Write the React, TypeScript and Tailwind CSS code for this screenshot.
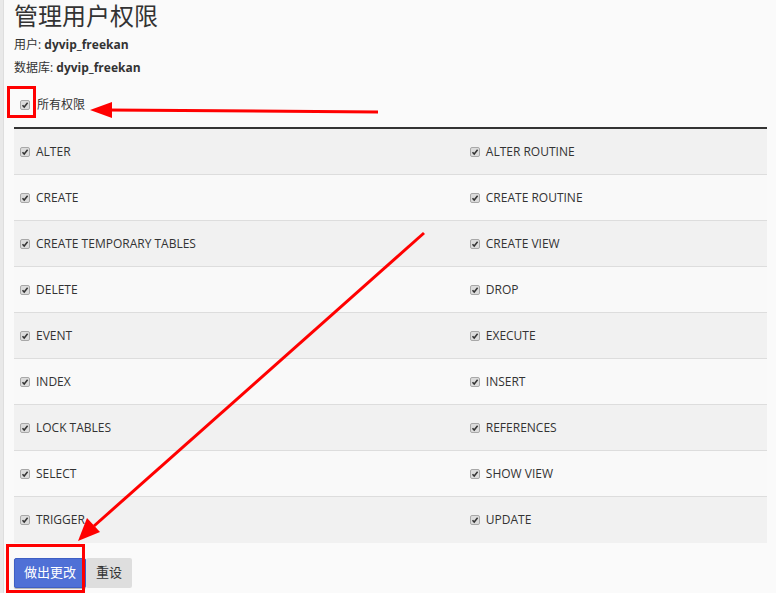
import React from 'react';

const perms: [string, string][] = [
  ['ALTER', 'ALTER ROUTINE'],
  ['CREATE', 'CREATE ROUTINE'],
  ['CREATE TEMPORARY TABLES', 'CREATE VIEW'],
  ['DELETE', 'DROP'],
  ['EVENT', 'EXECUTE'],
  ['INDEX', 'INSERT'],
  ['LOCK TABLES', 'REFERENCES'],
  ['SELECT', 'SHOW VIEW'],
  ['TRIGGER', 'UPDATE'],
];

function Check() {
  return (
    <svg width="10" height="10" viewBox="0 0 10 10" className="shrink-0">
      <rect x="0.5" y="0.5" width="9" height="9" rx="1.5" fill="#dcdcdc" stroke="#a8a8a8" />
      <path d="M2.5 5.2 L4.2 7 L7.6 2.8" fill="none" stroke="#333" strokeWidth="1.5" />
    </svg>
  );
}

function Perm({ label }: { label: string }) {
  return (
    <label className="flex items-center gap-[6px]">
      <Check />
      <span>{label}</span>
    </label>
  );
}

export default function App() {
  return (
    <div
      className="relative w-[776px] h-[593px] overflow-hidden bg-[#fafafa] text-[#333] flex"
      style={{ fontFamily: '"Open Sans", "Noto Sans CJK SC", sans-serif' }}
    >
      <div className="w-[4px] bg-[#e9e9e9] border-r border-[#dedede]" />
      <div className="flex-1 pl-[10px] pr-[9px]">
        <h1 className="text-[24px] leading-[32px] mt-[0px] text-[#333]">管理用户权限</h1>
        <p className="text-[12px] leading-[20px] mt-[3px]">
          用户: <b className="font-bold">dyvip_freekan</b>
        </p>
        <p className="text-[12px] leading-[20px] mt-[3px]">
          数据库: <b className="font-bold">dyvip_freekan</b>
        </p>
        <div className="flex items-center gap-[7px] text-[12px] h-[20px] mt-[17px] pl-[6px]">
          <Check />
          <span>所有权限</span>
        </div>
        <div className="mt-[12px] border-t-2 border-[#333] text-[12px]">
          {perms.map(([a, b], i) => (
            <div
              key={a}
              className={`grid grid-cols-[3fr_2fr] h-[46px] items-center ${i % 2 === 0 ? 'bg-[#f1f1f1]' : 'bg-[#f9f9f9]'} ${i < perms.length - 1 ? 'border-b border-[#dddddd]' : ''}`}
            >
              <div className="pl-[6px]">
                <Perm label={a} />
              </div>
              <div className="pl-[4px]">
                <Perm label={b} />
              </div>
            </div>
          ))}
        </div>
        <div className="flex mt-[15px] text-[13px]">
          <button className="h-[30px] px-[9px] bg-[#4f70d6] text-white rounded-[2px] border border-[#3f5fc4] shadow-[0_1px_1px_rgba(0,0,0,0.3)]">
            做出更改
          </button>
          <button className="h-[30px] px-[10px] bg-[#dedede] text-[#333] rounded-[2px]">重设</button>
        </div>
      </div>

      <svg className="absolute inset-0 pointer-events-none" width="776" height="593">
        <rect x="8.5" y="87.5" width="26" height="29" fill="none" stroke="#ff0000" strokeWidth="3" />
        <line x1="378" y1="112" x2="108" y2="110" stroke="#ff0000" strokeWidth="3" />
        <polygon points="90,110 112,102 112,118" fill="#ff0000" />
        <line x1="424" y1="233" x2="94" y2="526" stroke="#ff0000" strokeWidth="3" />
        <polygon points="78,541 87,518 100,532" fill="#ff0000" />
        <rect x="7.5" y="545.5" width="76" height="46" fill="none" stroke="#ff0000" strokeWidth="3" />
      </svg>
    </div>
  );
}
